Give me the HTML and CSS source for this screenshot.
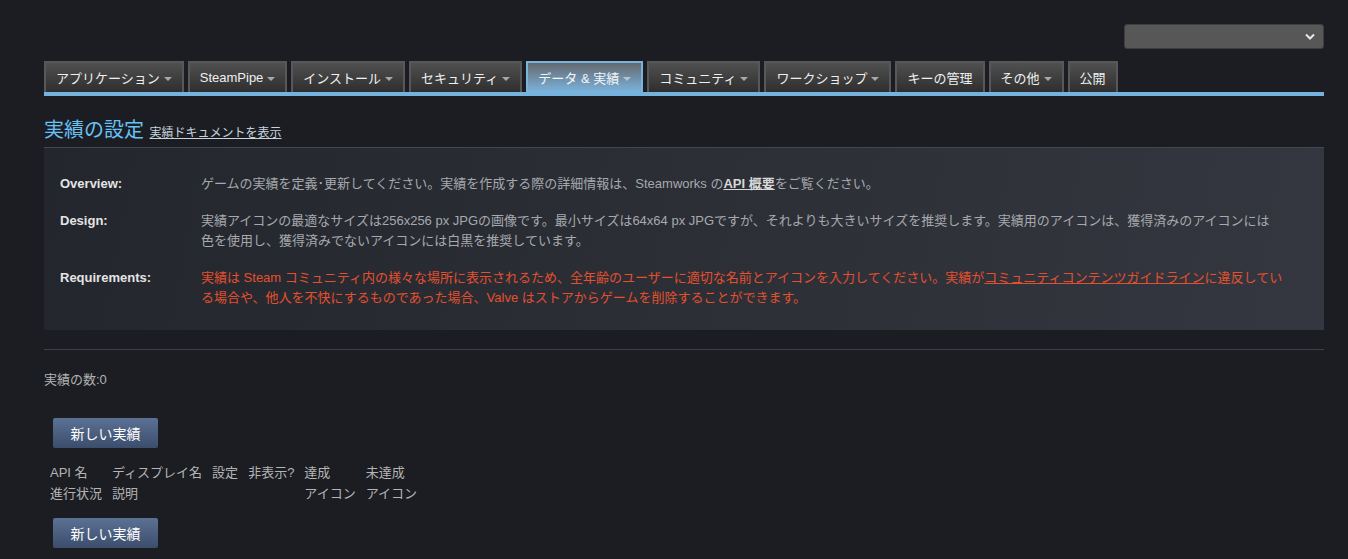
FILE: index.html
```html
<!DOCTYPE html>
<html lang="ja">
<head>
<meta charset="utf-8">
<title>実績の設定</title>
<link rel="stylesheet" href="styles.css">
</head>
<body>
<div class="page">
  <div class="topbar">
    <div class="select"><svg class="chev" width="10" height="7" viewBox="0 0 10 7"><path d="M1 1.5 L5 5.5 L9 1.5" fill="none" stroke="#e8e8e8" stroke-width="2"/></svg></div>
  </div>
  <nav class="tabs">
    <div class="tab">アプリケーション<span class="caret"></span></div>
    <div class="tab">SteamPipe<span class="caret"></span></div>
    <div class="tab">インストール<span class="caret"></span></div>
    <div class="tab">セキュリティ<span class="caret"></span></div>
    <div class="tab active">データ &amp; 実績<span class="caret"></span></div>
    <div class="tab">コミュニティ<span class="caret"></span></div>
    <div class="tab">ワークショップ<span class="caret"></span></div>
    <div class="tab">キーの管理</div>
    <div class="tab">その他<span class="caret"></span></div>
    <div class="tab">公開</div>
  </nav>
  <div class="tabline"></div>

  <h1 class="title">実績の設定 <a class="doclink" href="#">実績ドキュメントを表示</a></h1>

  <div class="infobox">
    <div class="label">Overview:</div>
    <div class="value">ゲームの実績を定義･更新してください。実績を作成する際の詳細情報は、Steamworks の<a href="#" class="strong">API 概要</a>をご覧ください。</div>
    <div class="label">Design:</div>
    <div class="value">実績アイコンの最適なサイズは256x256 px JPGの画像です。最小サイズは64x64 px JPGですが、それよりも大きいサイズを推奨します。実績用のアイコンは、獲得済みのアイコンには<br>色を使用し、獲得済みでないアイコンには白黒を推奨しています。</div>
    <div class="label">Requirements:</div>
    <div class="value warn">実績は Steam コミュニティ内の様々な場所に表示されるため、全年齢のユーザーに適切な名前とアイコンを入力してください。実績が<a href="#">コミュニティコンテンツガイドライン</a>に違反している場合や、他人を不快にするものであった場合、Valve はストアからゲームを削除することができます。</div>
  </div>

  <hr class="sep">

  <div class="count">実績の数:0</div>

  <button class="btn first">新しい実績</button>

  <table class="achtable">
    <tr><td>API 名</td><td>ディスプレイ名</td><td>設定</td><td>非表示?</td><td>達成</td><td>未達成</td></tr>
    <tr><td>進行状況</td><td>説明</td><td></td><td></td><td>アイコン</td><td>アイコン</td></tr>
  </table>

  <button class="btn">新しい実績</button>
</div>
</body>
</html>
```
FILE: styles.css
```css
html, body {
  margin: 0;
  padding: 0;
  background: #1b1d22;
}
body {
  font-family: Arial, "Liberation Sans", "Noto Sans CJK JP", sans-serif;
  color: #b8b8b8;
  font-size: 13px;
}
.page {
  width: 1280px;
  margin-left: 44px;
  padding-top: 24px;
}
.topbar {
  display: flex;
  justify-content: flex-end;
  height: 25px;
}
.select {
  width: 200px;
  height: 25px;
  background: #575757;
  border: 1px solid #3e3e3e;
  border-radius: 3px;
  display: flex;
  align-items: center;
  justify-content: flex-end;
  padding-right: 8px;
  box-sizing: border-box;
}
.tabs {
  display: flex;
  gap: 4px;
  margin-top: 12px;
  height: 31px;
  align-items: flex-end;
}
.tab {
  height: 31px;
  box-sizing: border-box;
  border: 2px solid #575859;
  border-bottom: none;
  background: linear-gradient(#505050, #2e2e2e);
  color: #f0f0f0;
  font-size: 13px;
  padding: 0 10px;
  display: flex;
  align-items: center;
  white-space: nowrap;
}
.tab.active {
  border-color: #7bb3dc;
  background: linear-gradient(#64696f, #7bb3dc);
  color: #f2f6fa;
}
.caret {
  display: inline-block;
  width: 0;
  height: 0;
  border-left: 4px solid transparent;
  border-right: 4px solid transparent;
  border-top: 4px solid #a8a8a8;
  margin-left: 4px;
  margin-top: 2px;
}
.tab.active .caret { border-top-color: #b4c4d2; }
.tabline {
  height: 4px;
  background: #76b2de;
}
.title {
  margin: 20px 0 0 0;
  font-size: 20px;
  font-weight: normal;
  color: #67c1f5;
  line-height: 28px;
  height: 28px;
}
.doclink {
  font-size: 12px;
  color: #c6d4df;
  text-decoration: underline;
}
.infobox {
  margin-top: 3px;
  background: linear-gradient(100deg, #24262d 0%, #34373f 100%);
  border-top: 1px solid #45484e;
  display: grid;
  grid-template-columns: 141px 1fr;
  row-gap: 17px;
  padding: 26px 30px 22px 16px;
  line-height: 20px;
}
.label {
  color: #e4e4e4;
  font-weight: bold;
}
.value {
  color: #a6a9ae;
}
.value a.strong {
  color: #d8d8d8;
  font-weight: bold;
  text-decoration: underline;
}
.value.warn {
  color: #e4502e;
}
.value.warn a {
  color: #e4502e;
  text-decoration: underline;
}
.sep {
  border: none;
  border-top: 1px solid #3d4046;
  margin: 19px 0 0 0;
  height: 0;
}
.count {
  margin-top: 21px;
  color: #b4b4b4;
  font-size: 13px;
  line-height: 18px;
}
.btn {
  display: block;
  margin: 29px 0 0 9px;
  width: 105px;
  height: 30px;
  border: none;
  border-radius: 2px;
  background: linear-gradient(#5b7194, #3c4d6c);
  color: #ffffff;
  font-family: Arial, "Liberation Sans", "Noto Sans CJK JP", sans-serif;
  font-size: 14px;
  padding: 0;
}
.achtable {
  border-collapse: collapse;
  margin: 14px 0 0 2px;
  font-size: 13px;
  color: #b4b4b4;
}
.achtable td {
  padding: 0 6px 0 4px;
  line-height: 21px;
  vertical-align: top;
  white-space: nowrap;
}
.achtable + .btn {
  margin-top: 14px;
}
```
